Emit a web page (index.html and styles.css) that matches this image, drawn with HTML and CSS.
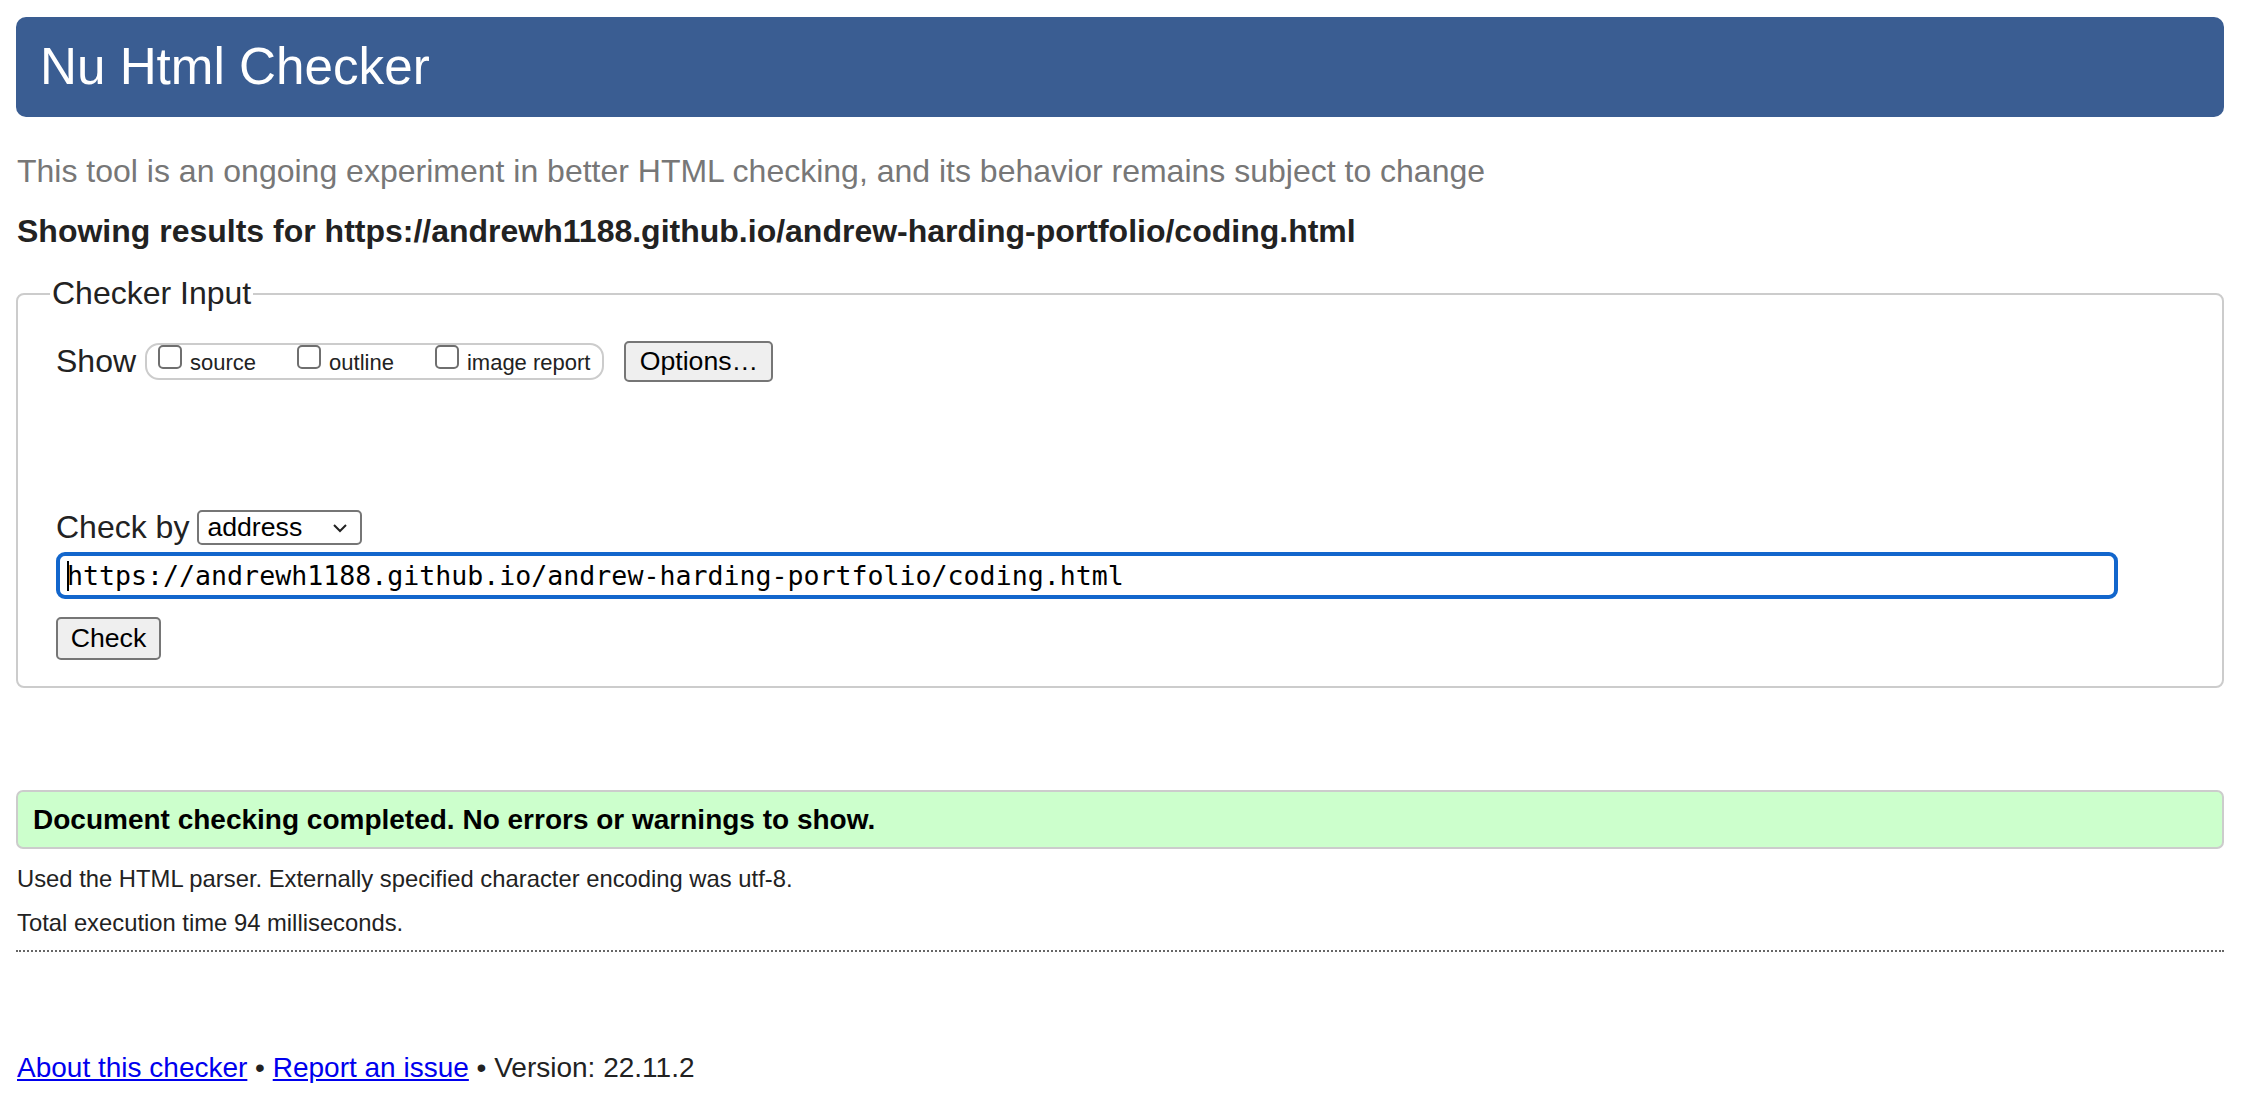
FILE: index.html
```html
<!DOCTYPE html>
<html lang="en">
<head>
<meta charset="utf-8">
<title>Nu Html Checker</title>
<link rel="stylesheet" href="styles.css">
</head>
<body>
<header class="banner"><h1 class="banner-title">Nu Html Checker</h1></header>
<p class="tagline">This tool is an ongoing experiment in better HTML checking, and its behavior remains subject to change</p>
<p class="showing">Showing results for https://andrewh1188.github.io/andrew-harding-portfolio/coding.html</p>
<fieldset class="input-box">
  <legend class="input-legend">Checker Input</legend>
  <div class="fields">
    <div class="show-row">
      <span class="row-label">Show</span>
      <div class="show-group">
        <label class="opt"><input type="checkbox" class="cb"><span class="opt-text">source</span></label>
        <label class="opt"><input type="checkbox" class="cb"><span class="opt-text">outline</span></label>
        <label class="opt"><input type="checkbox" class="cb"><span class="opt-text">image report</span></label>
      </div>
      <button class="btn btn-options" type="button">Options…</button>
    </div>
    <div class="checkby-row">
      <span class="row-label">Check by</span>
      <div class="select"><span class="select-text">address</span><svg class="chev" width="16" height="10" viewBox="0 0 16 10"><path d="M2 2 L8 8 L14 2" fill="none" stroke="#222" stroke-width="2"/></svg></div>
    </div>
    <div class="url-input"><span class="caret"></span><span class="url-text">https://andrewh1188.github.io/andrew-harding-portfolio/coding.html</span></div>
    <button class="btn btn-check" type="button">Check</button>
  </div>
</fieldset>
<div class="success">Document checking completed. No errors or warnings to show.</div>
<p class="details">Used the HTML parser. Externally specified character encoding was utf-8.</p>
<p class="details">Total execution time 94 milliseconds.</p>
<hr class="dotted">
<p class="footer"><a href="#">About this checker</a> • <a href="#">Report an issue</a> • Version: 22.11.2</p>
</body>
</html>
```
FILE: styles.css
```css
html, body {
  background: #ffffff;
}
body {
  margin: 0;
  padding: 0 22px 0 16px;
  font-family: "Liberation Sans", Arial, sans-serif;
  color: #222222;
}
.banner {
  margin-top: 17px;
  height: 100px;
  background: #3a5d92;
  border-radius: 10px;
  display: flex;
  align-items: center;
  padding-left: 24px;
}
.banner-title {
  margin: 0;
  font-size: 51.2px;
  font-weight: normal;
  color: #ffffff;
  line-height: 60px;
}
.tagline {
  margin: 36px 0 0 1px;
  font-size: 32px;
  line-height: 37px;
  color: #777777;
}
.showing {
  margin: 23px 0 0 1px;
  font-size: 32px;
  line-height: 37px;
  font-weight: bold;
  color: #222222;
}
.input-box {
  margin: 25px 0 0 0;
  padding: 29px 0 26px 0;
  border: 2px solid #cccccc;
  border-radius: 8px;
  min-width: 0;
}
.input-legend {
  margin-left: 32px;
  padding: 0 2px;
  font-size: 32px;
  line-height: 37px;
}
.fields {
  padding-left: 38px;
}
.show-row {
  display: flex;
  align-items: center;
  height: 41px;
}
.row-label {
  font-size: 32px;
  line-height: 37px;
}
.show-group {
  margin-left: 9px;
  height: 37px;
  box-sizing: border-box;
  border: 2px solid #cccccc;
  border-radius: 14px;
  display: flex;
  align-items: flex-start;
  padding: 0 12px 0 11px;
  gap: 41px;
}
.opt {
  display: flex;
  align-items: flex-start;
  gap: 8px;
}
.cb {
  appearance: none;
  -webkit-appearance: none;
  margin: 0;
  width: 24px;
  height: 24px;
  box-sizing: border-box;
  border: 2px solid #6f6f6f;
  border-radius: 5px;
  background: #ffffff;
}
.opt-text {
  margin-top: 5px;
  font-size: 22px;
  line-height: 26px;
}
.btn {
  font-family: "Liberation Sans", Arial, sans-serif;
  font-size: 26.67px;
  color: #000000;
  background: #efefef;
  border: 2px solid #767676;
  border-radius: 5px;
  padding: 0;
  margin: 0;
}
.btn-options {
  margin-left: 20px;
  width: 149px;
  height: 41px;
}
.checkby-row {
  margin-top: 128px;
  display: flex;
  align-items: center;
  height: 35px;
}
.select {
  margin-left: 8px;
  width: 165px;
  height: 35px;
  box-sizing: border-box;
  border: 2px solid #767676;
  border-radius: 5px;
  display: flex;
  align-items: center;
  justify-content: space-between;
  padding: 0 12px 0 8px;
  font-size: 26.67px;
  color: #000000;
}
.chev {
  display: block;
}
.url-input {
  margin-top: 7px;
  width: 2062px;
  height: 47px;
  box-sizing: border-box;
  border: 4px solid #1266cc;
  border-radius: 9px;
  display: flex;
  align-items: center;
  padding-left: 7px;
  font-family: "DejaVu Sans Mono", "Liberation Mono", monospace;
  font-size: 26.6px;
  color: #000000;
}
.caret {
  width: 2px;
  height: 30px;
  background: #000000;
  margin-right: -2px;
}
.btn-check {
  display: block;
  margin-top: 18px;
  width: 105px;
  height: 43px;
}
.success {
  margin-top: 102px;
  height: 59px;
  box-sizing: border-box;
  border: 2px solid #cccccc;
  border-radius: 7px;
  background: #ccffcc;
  display: flex;
  align-items: center;
  padding-left: 15px;
  font-size: 28px;
  font-weight: bold;
  color: #000000;
}
.details {
  margin: 16px 0 0 1px;
  font-size: 23.8px;
  line-height: 28px;
}
.dotted {
  margin: 13px 0 0 0;
  border: 0;
  border-top: 2px dotted #666666;
  height: 0;
}
.footer {
  margin: 100px 0 0 1px;
  font-size: 28px;
  line-height: 32px;
}
.footer a {
  color: #0000ee;
}
```
